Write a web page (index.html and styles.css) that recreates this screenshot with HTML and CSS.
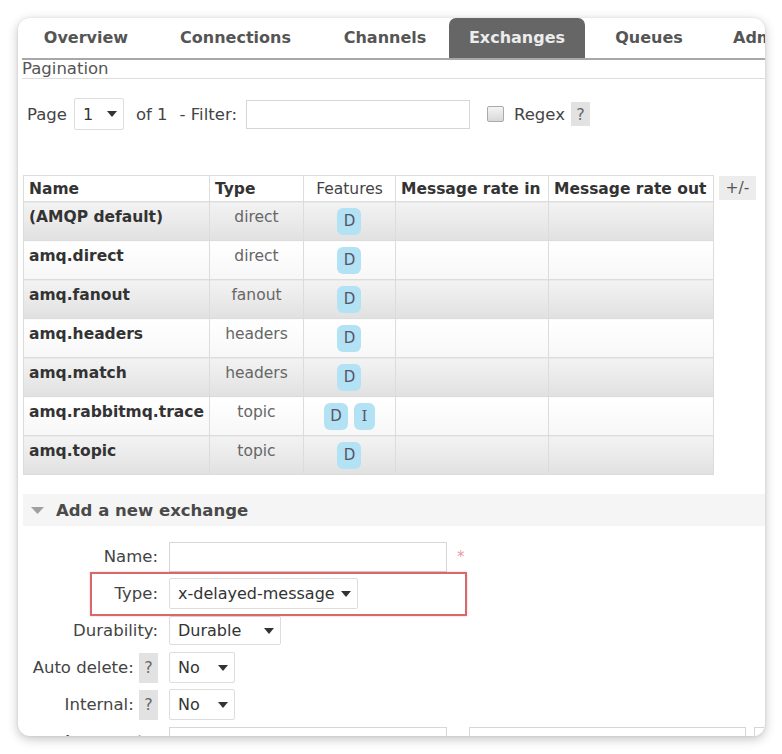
FILE: index.html
```html
<!DOCTYPE html>
<html>
<head>
<meta charset="utf-8">
<link rel="stylesheet" href="styles.css">
</head>
<body>
<div class="card">
  <div class="tabs">
    <div class="tab t1">Overview</div>
    <div class="tab t2">Connections</div>
    <div class="tab t3">Channels</div>
    <div class="tab t4 active">Exchanges</div>
    <div class="tab t5">Queues</div>
    <div class="tab t6">Admin</div>
  </div>
  <div class="content">
    <h2 class="pag-title">Pagination</h2>
    <div class="pag-row">
      <span class="lbl">Page</span>
      <div class="select sel-page"><span>1</span><svg class="caret" width="10" height="6" viewBox="0 0 10 6"><path d="M0 0H10L5 6Z"/></svg></div>
      <span class="lbl of">of 1</span>
      <span class="lbl filter">- Filter:</span>
      <div class="input filter-input"></div>
      <span class="checkbox"></span>
      <span class="lbl regex">Regex</span>
      <span class="help help-sm">?</span>
    </div>

    <div class="table-wrap">
      <table class="list">
        <thead>
          <tr>
            <th class="c-name">Name</th>
            <th class="c-type">Type</th>
            <th class="c-feat">Features</th>
            <th class="c-in">Message rate in</th>
            <th class="c-out">Message rate out</th>
          </tr>
        </thead>
        <tbody>
          <tr class="alt1"><td class="name">(AMQP default)</td><td class="type">direct</td><td class="feat"><span class="badge">D</span></td><td></td><td></td></tr>
          <tr class="alt0"><td class="name">amq.direct</td><td class="type">direct</td><td class="feat"><span class="badge">D</span></td><td></td><td></td></tr>
          <tr class="alt1"><td class="name">amq.fanout</td><td class="type">fanout</td><td class="feat"><span class="badge">D</span></td><td></td><td></td></tr>
          <tr class="alt0"><td class="name">amq.headers</td><td class="type">headers</td><td class="feat"><span class="badge">D</span></td><td></td><td></td></tr>
          <tr class="alt1"><td class="name">amq.match</td><td class="type">headers</td><td class="feat"><span class="badge">D</span></td><td></td><td></td></tr>
          <tr class="alt0"><td class="name">amq.rabbitmq.trace</td><td class="type">topic</td><td class="feat"><span class="badge">D</span><span class="badge badge-i">I</span></td><td></td><td></td></tr>
          <tr class="alt1"><td class="name">amq.topic</td><td class="type">topic</td><td class="feat"><span class="badge">D</span></td><td></td><td></td></tr>
        </tbody>
      </table>
      <span class="plusminus">+/-</span>
    </div>

    <div class="section-head">
      <svg class="tri" width="13" height="7" viewBox="0 0 13 7"><path d="M0 0H13L6.5 7Z"/></svg>
      <span>Add a new exchange</span>
    </div>

    <div class="form">
      <div class="frow">
        <div class="flabel">Name:</div>
        <div class="input name-input"></div>
        <span class="req">*</span>
      </div>
      <div class="frow">
        <div class="flabel">Type:</div>
        <div class="select sel-type"><span>x-delayed-message</span><svg class="caret" width="10" height="6" viewBox="0 0 10 6"><path d="M0 0H10L5 6Z"/></svg></div>
      </div>
      <div class="frow">
        <div class="flabel">Durability:</div>
        <div class="select sel-dur"><span>Durable</span><svg class="caret" width="10" height="6" viewBox="0 0 10 6"><path d="M0 0H10L5 6Z"/></svg></div>
      </div>
      <div class="frow">
        <div class="flabel">Auto delete: <span class="help">?</span></div>
        <div class="select sel-no"><span>No</span><svg class="caret" width="10" height="6" viewBox="0 0 10 6"><path d="M0 0H10L5 6Z"/></svg></div>
      </div>
      <div class="frow">
        <div class="flabel">Internal: <span class="help">?</span></div>
        <div class="select sel-no"><span>No</span><svg class="caret" width="10" height="6" viewBox="0 0 10 6"><path d="M0 0H10L5 6Z"/></svg></div>
      </div>
      <div class="frow">
        <div class="flabel">Arguments:</div>
        <div class="input name-input"></div>
        <div class="input arg-val"></div>
        <div class="input arg-type"></div>
      </div>
      <div class="highlight"></div>
    </div>
  </div>
</div>
</body>
</html>
```

FILE: styles.css
```css
html, body {
  margin: 0;
  padding: 0;
  background: #ffffff;
}

body {
  font-family: "DejaVu Sans", Verdana, sans-serif;
  color: #444;
  width: 782px;
  height: 754px;
  overflow: hidden;
}

.card {
  margin: 18px 0 0 18px;
  width: 747px;
  height: 718px;
  border-radius: 12px;
  background: #fff;
  box-shadow: 0 3px 11px rgba(0, 0, 0, 0.24), 0 0 3px rgba(0, 0, 0, 0.08);
  overflow: hidden;
}

/* Tabs */
.tabs {
  display: flex;
  height: 40px;
  margin-left: 4px;
  border-bottom: 2px solid #a8a8a8;
  width: 900px;
}

.tab {
  flex: none;
  height: 40px;
  line-height: 39px;
  text-align: center;
  font-weight: bold;
  font-size: 16px;
  color: #555;
  white-space: nowrap;
}

.t1 { width: 128px; }
.t2 { width: 171px; }
.t3 { width: 128px; }
.t4 { width: 136px; }
.t5 { width: 128px; }
.t6 { width: 120px; text-align: left; padding-left: 20px; }

.tab.active {
  background: #666;
  color: #ececec;
  border-radius: 7px 7px 0 0;
}

.content {
  padding-left: 5px;
}

/* Pagination */
.pag-title {
  margin: 0 0 0 -1px;
  font-size: 16.5px;
  font-weight: normal;
  color: #555;
  line-height: 18px;
  height: 18px;
  border-bottom: 1px solid #ddd;
  width: 760px;
}

.pag-row {
  display: flex;
  align-items: center;
  height: 32px;
  margin-top: 19px;
  padding-left: 4px;
  font-size: 16.5px;
}

.lbl { color: #444; flex: none; }

.select {
  flex: none;
  display: flex;
  align-items: center;
  justify-content: space-between;
  box-sizing: border-box;
  height: 31px;
  padding: 0 6px 0 8px;
  background: #fff;
  border: 1px solid #ddd;
  border-radius: 2px;
  color: #333;
  font-size: 16px;
}

.caret { fill: #333; flex: none; }

.sel-page {
  width: 50px;
  height: 32px;
  margin-left: 7px;
}

.of { margin-left: 12px; }
.filter { margin-left: 12px; }

.input {
  flex: none;
  box-sizing: border-box;
  background: #fff;
  border: 1px solid #d6d6d6;
}

.filter-input {
  width: 224px;
  height: 29px;
  margin-left: 9px;
}

.checkbox {
  flex: none;
  box-sizing: border-box;
  width: 17px;
  height: 16px;
  margin-left: 17px;
  border: 1px solid #aaa;
  border-radius: 2px;
  background: linear-gradient(#f4f4f4, #d8d8d8);
}

.regex { margin-left: 10px; }

.help {
  display: inline-flex;
  align-items: center;
  justify-content: center;
  width: 19px;
  height: 30px;
  background: #e2e2e2;
  color: #666;
  font-size: 16px;
  vertical-align: middle;
}

.help-sm {
  height: 24px;
  margin-left: 6px;
}

/* Table */
.table-wrap {
  display: flex;
  align-items: flex-start;
  margin-top: 45px;
}

.list {
  border-collapse: collapse;
  font-size: 15.5px;
}

.list th, .list td {
  border: 1px solid #dcdcdc;
  padding: 0 5px;
  white-space: nowrap;
}

.list th {
  height: 25px;
  text-align: left;
  font-weight: bold;
  color: #333;
  background: #fff;
  line-height: 18px;
}

.list th.c-feat { font-weight: normal; color: #444; text-align: center; }

.c-name { width: 174px; }
.c-type { width: 83px; }
.c-feat { width: 81px; }
.c-in { width: 142px; }
.c-out { width: 154px; }

.list td {
  height: 39px;
  vertical-align: top;
  padding-top: 5px;
  box-sizing: border-box;
  line-height: 20px;
}

.alt1 td { background: linear-gradient(#f3f3f3, #e1e1e1); }
.alt0 td { background: linear-gradient(#ffffff, #f7f7f7); }

td.name { font-weight: bold; color: #333; }
td.type { text-align: center; color: #666; }
td.feat { text-align: center; padding-top: 6px; }

.badge {
  display: inline-block;
  width: 24px;
  height: 27px;
  line-height: 27px;
  border-radius: 6px;
  background: #b3e2f4;
  color: #556;
  font-size: 15px;
  text-align: center;
}

.badge-i {
  margin-left: 6px;
  width: 21px;
  font-family: "DejaVu Serif", serif;
}

.plusminus {
  margin-left: 5px;
  margin-top: 1px;
  width: 37px;
  height: 24px;
  line-height: 24px;
  text-align: center;
  background: #ececec;
  color: #555;
  font-size: 15.5px;
}

/* Section */
.section-head {
  display: flex;
  align-items: center;
  height: 32px;
  margin-top: 19px;
  background: #f5f5f5;
  width: 760px;
  font-size: 16.5px;
  font-weight: bold;
  color: #4a4a4a;
}

.tri {
  fill: #a0a0a0;
  margin-left: 8px;
  margin-right: 12px;
}

/* Form */
.form {
  position: relative;
  display: flex;
  flex-direction: column;
  gap: 6px;
  margin-top: 15px;
  font-size: 16.5px;
}

.frow {
  display: flex;
  align-items: center;
  height: 31px;
}

.flabel {
  flex: none;
  width: 135px;
  text-align: right;
  margin-right: 11px;
  color: #444;
  white-space: nowrap;
}

.name-input {
  width: 278px;
  height: 30px;
}

.req {
  color: #e89aa6;
  margin-left: 10px;
  font-size: 15px;
}

.sel-type { width: 189px; }
.sel-dur { width: 112px; height: 29px; }
.sel-no { width: 66px; }

.arg-val {
  width: 277px;
  height: 30px;
  margin-left: 22px;
}

.arg-type {
  width: 60px;
  height: 30px;
  margin-left: 8px;
}

.highlight {
  position: absolute;
  left: 67px;
  top: 31px;
  width: 377px;
  height: 44px;
  box-sizing: border-box;
  border: 2px solid #d66a6a;
  box-shadow: 0 0 2px rgba(214, 106, 106, 0.4);
  pointer-events: none;
}
```
